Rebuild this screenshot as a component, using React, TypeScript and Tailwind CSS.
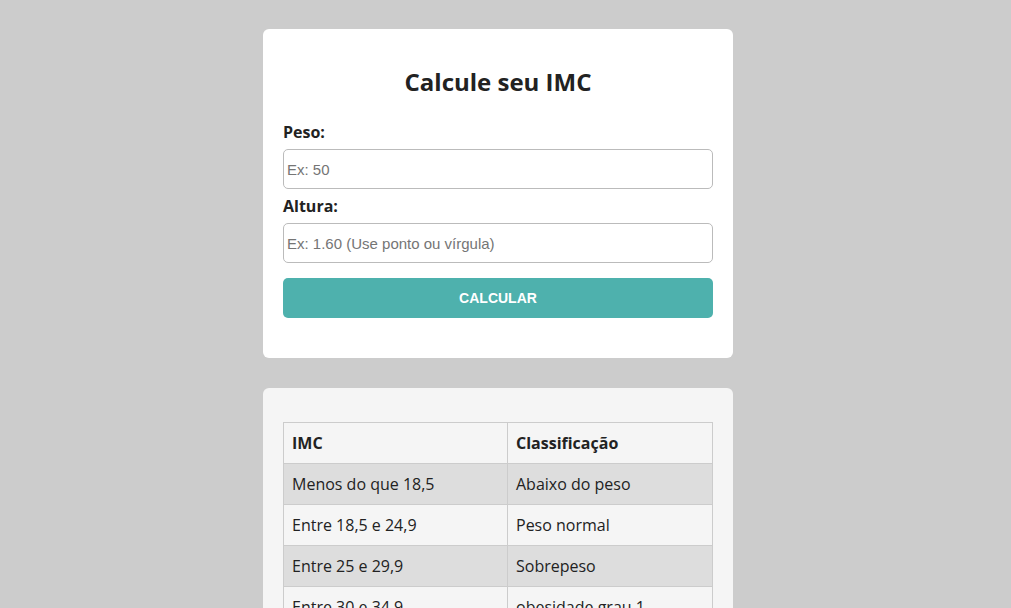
const rows = [
  ["Menos do que 18,5", "Abaixo do peso"],
  ["Entre 18,5 e 24,9", "Peso normal"],
  ["Entre 25 e 29,9", "Sobrepeso"],
  ["Entre 30 e 34,9", "obesidade grau 1"],
  ["Entre 35 e 39,9", "obesidade grau 2"],
  ["Mais do que 40", "obesidade grau 3"],
];

export default function App() {
  return (
    <div className="min-h-screen bg-[#cccccc] pt-[29px] pr-[15px] pb-10 font-['Open_Sans',sans-serif] text-[#222]">
      <div className="mx-auto w-[470px] rounded-[6px] bg-white px-5 pt-[35px] pb-10">
        <h1 className="text-center text-[24px] font-bold leading-[35px]">Calcule seu IMC</h1>
        <label className="mt-[22px] mb-[6px] block text-base font-bold leading-[22px]">Peso:</label>
        <input
          className="block h-10 w-full rounded-[5px] border border-[#bbbbbb] px-[3px] font-['Liberation_Sans',Arial,sans-serif] text-[15px] placeholder:text-[#757575] outline-none"
          placeholder="Ex: 50"
        />
        <label className="mt-[6px] mb-[6px] block text-base font-bold leading-[22px]">Altura:</label>
        <input
          className="block h-10 w-full rounded-[5px] border border-[#bbbbbb] px-[3px] font-['Liberation_Sans',Arial,sans-serif] text-[15px] placeholder:text-[#757575] outline-none"
          placeholder="Ex: 1.60 (Use ponto ou vírgula)"
        />
        <button className="mt-[15px] block h-10 w-full rounded-[5px] bg-[#4eb1ad] font-['Liberation_Sans',Arial,sans-serif] text-sm font-bold text-white">
          CALCULAR
        </button>
      </div>

      <div className="mx-auto mt-[30px] w-[470px] rounded-[6px] bg-[#f5f5f5] px-5 pt-[34px] pb-5">
        <table className="w-full border-collapse text-base">
          <thead>
            <tr>
              <th className="w-[224px] border border-[#cccccc] px-2 py-[9px] text-left font-bold leading-[22px]">IMC</th>
              <th className="border border-[#cccccc] px-2 py-[9px] text-left font-bold leading-[22px]">Classificação</th>
            </tr>
          </thead>
          <tbody>
            {rows.map((r, i) => (
              <tr key={i} className={i % 2 === 0 ? "bg-[#dddddd]" : ""}>
                <td className="border border-[#cccccc] px-2 py-[9px] leading-[22px]">{r[0]}</td>
                <td className="border border-[#cccccc] px-2 py-[9px] leading-[22px]">{r[1]}</td>
              </tr>
            ))}
          </tbody>
        </table>
      </div>
    </div>
  );
}
